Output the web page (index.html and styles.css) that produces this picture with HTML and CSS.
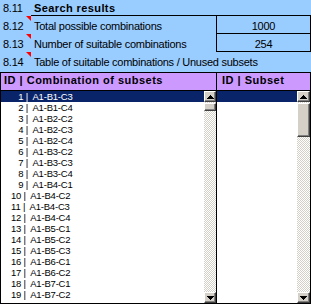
FILE: index.html
```html
<!DOCTYPE html>
<html lang="en">
<head>
    <meta charset="UTF-8">
    <meta name="viewport" content="width=device-width, initial-scale=1.0">
    <title>Search results</title>
    <link rel="stylesheet" href="styles.css">
</head>
<body>
    <!-- Summary block -->
    <div class="sheet">
        <div class="num row-1">8.11</div>
        <div class="title row-1">Search results</div>

        <div class="num note row-2">8.12</div>
        <div class="label row-2">Total possible combinations</div>
        <div class="value row-2">1000</div>

        <div class="num note row-3">8.13</div>
        <div class="label row-3">Number of suitable combinations</div>
        <div class="value row-3">254</div>

        <div class="num note row-4">8.14</div>
        <div class="caption row-4">Table of suitable combinations / Unused subsets</div>
    </div>

    <!-- List boxes -->
    <div class="lists">
        <div class="listbox combos">
            <div class="list-head">ID | Combination of subsets</div>
            <div class="list-body">
                <ul class="items">
                    <li class="selected">   1 |  A1-B1-C3</li>
                    <li>   2 |  A1-B1-C4</li>
                    <li>   3 |  A1-B2-C2</li>
                    <li>   4 |  A1-B2-C3</li>
                    <li>   5 |  A1-B2-C4</li>
                    <li>   6 |  A1-B3-C2</li>
                    <li>   7 |  A1-B3-C3</li>
                    <li>   8 |  A1-B3-C4</li>
                    <li>   9 |  A1-B4-C1</li>
                    <li>10 |  A1-B4-C2</li>
                    <li>11 |  A1-B4-C3</li>
                    <li>12 |  A1-B4-C4</li>
                    <li>13 |  A1-B5-C1</li>
                    <li>14 |  A1-B5-C2</li>
                    <li>15 |  A1-B5-C3</li>
                    <li>16 |  A1-B6-C1</li>
                    <li>17 |  A1-B6-C2</li>
                    <li>18 |  A1-B7-C1</li>
                    <li>19 |  A1-B7-C2</li>
                </ul>
                <div class="scrollbar">
                    <div class="sb-btn">
                        <svg width="7" height="4" viewBox="0 0 7 4" shape-rendering="crispEdges"><polygon points="3.5,0 7,4 0,4" fill="#000"/></svg>
                    </div>
                    <div class="sb-track"><div class="sb-thumb small"></div></div>
                    <div class="sb-btn">
                        <svg width="7" height="4" viewBox="0 0 7 4" shape-rendering="crispEdges"><polygon points="0,0 7,0 3.5,4" fill="#000"/></svg>
                    </div>
                </div>
            </div>
        </div>

        <div class="listbox unused">
            <div class="list-head">ID | Subset</div>
            <div class="list-body">
                <ul class="items">
                    <li class="selected"> </li>
                </ul>
                <div class="scrollbar wide">
                    <div class="sb-btn">
                        <svg width="7" height="4" viewBox="0 0 7 4" shape-rendering="crispEdges"><polygon points="3.5,0 7,4 0,4" fill="#000"/></svg>
                    </div>
                    <div class="sb-track"><div class="sb-thumb large"></div></div>
                    <div class="sb-btn">
                        <svg width="7" height="4" viewBox="0 0 7 4" shape-rendering="crispEdges"><polygon points="0,0 7,0 3.5,4" fill="#000"/></svg>
                    </div>
                </div>
            </div>
        </div>
    </div>
</body>
</html>
```

FILE: styles.css
```css
body {
    margin: 0;
    background-color: #99ccff;
    font-family: "Liberation Sans", Arial, sans-serif;
    font-size: 11px;
    letter-spacing: -0.25px;
    color: #000;
}

/* Summary grid: number column, label column, value column */
.sheet {
    display: grid;
    grid-template-columns: 31px 185px 95px;
    grid-template-rows: 16px 18px 18px 20px;
    width: 311px;
    line-height: 13px;
}

.sheet > div {
    box-sizing: border-box;
    white-space: nowrap;
}

.row-1 { padding-top: 2px; }
.row-2,
.row-3,
.row-4 { padding-top: 4px; }

.num {
    padding-left: 3px;
    position: relative;
}

/* red comment marker in the cell corner */
.num.note::after {
    content: "";
    position: absolute;
    top: 0;
    right: 0;
    border-top: 5px solid #ff0000;
    border-left: 5px solid transparent;
}

.title {
    grid-column: 2 / 4;
    font-weight: bold;
    letter-spacing: 0.4px;
    padding-left: 3px;
    border-bottom: 1px solid #000;
}

.label {
    padding-left: 3px;
}

.value {
    text-align: center;
    border-left: 1px solid #000;
    border-right: 1px solid #000;
    border-bottom: 1px solid #000;
}

.caption {
    grid-column: 2 / 4;
    padding-left: 3px;
}

/* List boxes */
.lists {
    display: grid;
    grid-template-columns: 217px 94px;
    background: #fff;
    padding-bottom: 2px;
}

.listbox {
    border-right: 1px solid #000;
    border-bottom: 1px solid #000;
}

.listbox.combos {
    border-left: 1px solid #000;
}

.list-head {
    background: #cc99ff;
    border-top: 1px solid #000;
    border-bottom: 1px solid #000;
    height: 17px;
    line-height: 15px;
    font-weight: bold;
    letter-spacing: 0.5px;
    padding-left: 3px;
    white-space: nowrap;
}

.unused .list-head {
    padding-left: 5px;
}

.list-body {
    display: flex;
    height: 212px;
    background: #fff;
}

.items {
    flex: 1;
    margin: 0;
    padding: 0;
    list-style: none;
    overflow: hidden;
    font-size: 9.5px;
    letter-spacing: -0.2px;
}

.items li {
    height: 11px;
    line-height: 11px;
    white-space: pre;
    padding-left: 10px;
}

.items li.selected {
    background: #0a246a;
    color: #fff;
}

/* Classic scrollbar */
.scrollbar {
    width: 12px;
    display: flex;
    flex-direction: column;
}

.scrollbar.wide {
    width: 13px;
}

.sb-btn,
.sb-thumb {
    box-sizing: border-box;
    background: #d4d0c8;
    border-top: 1px solid #fff;
    border-left: 1px solid #fff;
    border-right: 1px solid #404040;
    border-bottom: 1px solid #404040;
    box-shadow: inset -1px -1px 0 #808080;
}

.sb-btn {
    height: 11px;
    display: flex;
    align-items: center;
    justify-content: center;
}

.sb-track {
    flex: 1;
    padding-top: 1px;
    background: repeating-conic-gradient(#d4d0c8 0 25%, #fff 0 50%) 0 0 / 2px 2px;
}

.sb-thumb.small {
    height: 8px;
}

.sb-thumb.large {
    height: 34px;
}
```
